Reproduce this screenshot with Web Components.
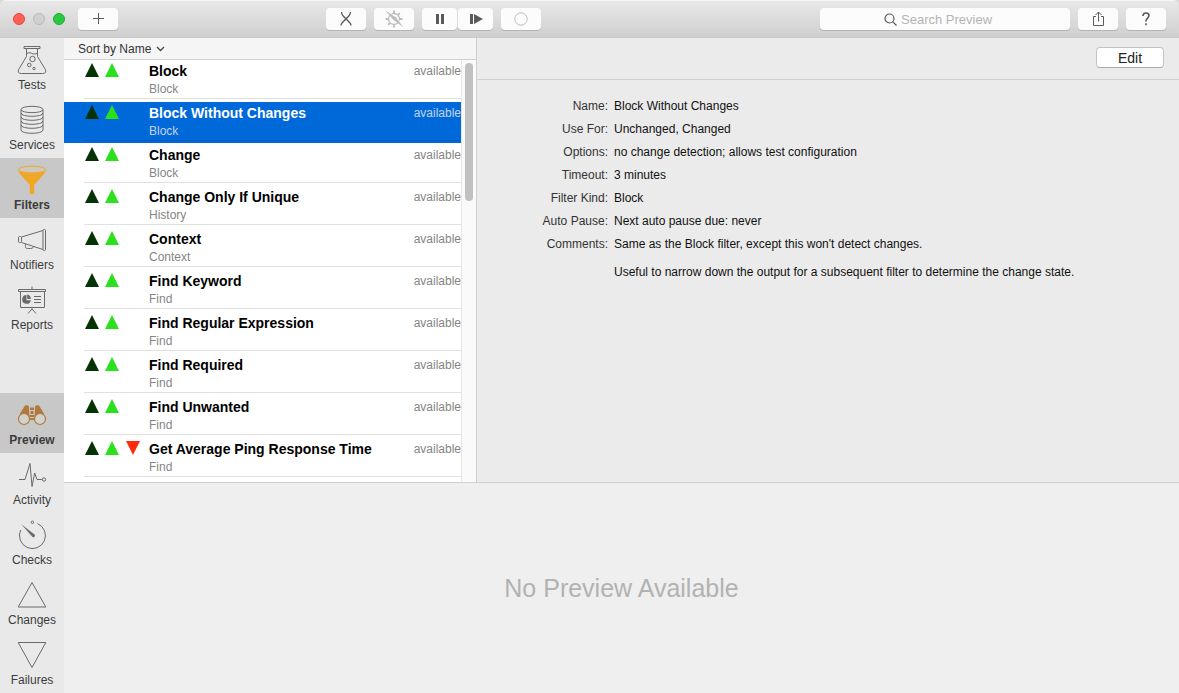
<!DOCTYPE html>
<html lang="en">
<head>
<meta charset="utf-8">
<title>Filters</title>
<style>
  html, body {
    height: 100%;
    margin: 0;
  }

  body {
    background: #d8d8d8;
    color: #111;
    font: 12px/16px "Liberation Sans", Arial, Helvetica, sans-serif;
    overflow: hidden;
  }
</style>
</head>
<body>

<app-window>
  <app-toolbar slot="toolbar"></app-toolbar>

  <side-bar slot="sidebar">
    <side-item icon="tests">Tests</side-item>
    <side-item icon="services">Services</side-item>
    <side-item icon="filters" selected>Filters</side-item>
    <side-item icon="notifiers">Notifiers</side-item>
    <side-item icon="reports">Reports</side-item>
    <side-item slot="bottom" icon="preview" selected>Preview</side-item>
    <side-item slot="bottom" icon="activity">Activity</side-item>
    <side-item slot="bottom" icon="checks">Checks</side-item>
    <side-item slot="bottom" icon="changes">Changes</side-item>
    <side-item slot="bottom" icon="failures">Failures</side-item>
  </side-bar>

  <filter-list slot="list">
    <filter-row kind="Block">Block</filter-row>
    <filter-row kind="Block" selected>Block Without Changes</filter-row>
    <filter-row kind="Block">Change</filter-row>
    <filter-row kind="History">Change Only If Unique</filter-row>
    <filter-row kind="Context">Context</filter-row>
    <filter-row kind="Find">Find Keyword</filter-row>
    <filter-row kind="Find">Find Regular Expression</filter-row>
    <filter-row kind="Find">Find Required</filter-row>
    <filter-row kind="Find">Find Unwanted</filter-row>
    <filter-row kind="Find" failed>Get Average Ping Response Time</filter-row>
  </filter-list>

  <detail-pane slot="detail">
    <detail-field label="Name">Block Without Changes</detail-field>
    <detail-field label="Use For">Unchanged, Changed</detail-field>
    <detail-field label="Options">no change detection; allows test configuration</detail-field>
    <detail-field label="Timeout">3 minutes</detail-field>
    <detail-field label="Filter Kind">Block</detail-field>
    <detail-field label="Auto Pause">Next auto pause due: never</detail-field>
    <detail-field label="Comments">Same as the Block filter, except this won't detect changes.<span slot="more">Useful to narrow down the output for a subsequent filter to determine the change state.</span></detail-field>
  </detail-pane>

  <preview-pane slot="preview">No Preview Available</preview-pane>
</app-window>

<script>
// Sidebar icons, all drawn on a 32x32 grid
const ICONS = {
  tests: `
    <path d="M8 2.500h16v2H8z M10.500 4.500v8L3.200 24.500q-2.800 5 2.300 5h21q5.100 0 2.300-5L21.500 12.500v-8"/>
    <path d="M10.500 9.500c3-1.400 4.500-.5 5.500 0s3 1 5.500-.5"/>
    <circle cx="16.500" cy="15" r="2.700"/><circle cx="13.300" cy="21" r="1.800"/><circle cx="18" cy="24.500" r="1.200"/>`,
  services: `
    <ellipse cx="16" cy="5.500" rx="11" ry="3.200"/>
    <path d="M5 5.500v3.500c0 4.400 22 4.400 22 0V5.500 M5 9v4c0 4.400 22 4.400 22 0V9 M5 13v4c0 4.400 22 4.400 22 0v-4 M5 17v4c0 4.400 22 4.400 22 0v-4 M5 21v5c0 4.400 22 4.400 22 0v-5"/>`,
  filters: `
    <path fill="#f0a726" stroke="none" d="M2 5.500c0 5 28 5 28 0 0 3-3 5.500-6 9l-4 4.500c-1 1-1.800 1.600-1.800 3v8h-4.400v-8c0-1.400-.8-2-1.800-3l-4-4.500c-3-3.500-6-6-6-9z"/>
    <ellipse cx="16" cy="5.500" rx="13.500" ry="3.300" fill="#cdc9c2" stroke="#f0a726"/>`,
  notifiers: `
    <rect x="2.500" y="12.500" width="3" height="6" rx="1"/>
    <path d="M5.500 13L27 6.500 M5.500 18.500L27 25.500"/>
    <rect x="27" y="5.500" width="2.500" height="21" rx="1"/>
    <path d="M9.500 20c-.5 5 1 4.500 3.500 4.500s4 0 4.500-2"/>`,
  reports: `
    <path d="M16 2.500v3 M2.500 5.500h27v2h-27z M4.500 7.500v16h24v-16 M16 23.500v1.500 M12 29.500l4-4.500 4 4.500 M18 12.500h7 M18 15.500h7 M18 18.500h7"/>
    <path fill="#6a6a6a" stroke="none" d="M10.500 15.500V11a4.400 4.400 0 1 0 4.400 5.200h-4.400z M11.200 10.600a4.400 4.400 0 0 1 3.600 4.400h-3.600z"/>`,
  preview: `
    <g fill="#b07a3e" stroke="none">
      <path d="M8.600 7q2.200-1.500 4.200 0l.7 11.500Q10 14 3.500 15.500z"/>
      <path d="M23.400 7q-2.200-1.500-4.200 0l-.7 11.500q3.500-4.500 10-3z"/>
      <path d="M14 8.500h4v2.500h-4z M14.500 12h3v3h-3z M13.500 16h5v2h-5z M14 19h4v2h-4z"/>
    </g>
    <g fill="#d4d0cb" stroke="#b07a3e" stroke-width="1.200"><circle cx="8" cy="20" r="5.500"/><circle cx="24" cy="20" r="5.500"/></g>`,
  activity: `
    <path d="M3 20.500h6L14 4.500l2 23 2.700-13.500 2.300 6.500h5.300" stroke-linejoin="bevel"/><circle cx="28" cy="20.500" r="1.700"/>`,
  checks: `
    <path d="M21.500 4.600A13 13 0 1 1 4.700 11"/><circle cx="16.400" cy="3.300" r="1.200"/>
    <path fill="#6a6a6a" stroke="none" d="M5.300 5.300L18.500 15.500q1 1.200 0 2.200t-2.200 0z"/>`,
  changes: `<path d="M16 3.500L29.800 28H2.200z"/>`,
  failures: `<path d="M16 28.500L29.800 3.500H2.200z"/>`
};

class BaseElement extends HTMLElement {
  connectedCallback() {
    if (!this.shadowRoot) {
      this.attachShadow({ mode: 'open' });
      this.shadowRoot.innerHTML = this.render();
    }
  }
}

/* ---------- window frame ---------- */
class AppWindow extends BaseElement {
  render() {
    return `
      <style>
        :host {
          display: grid;
          grid-template: 38px minmax(0, 1fr) 211px / 64px 413px minmax(0, 1fr);
          grid-template-areas:
            "toolbar toolbar toolbar"
            "sidebar list detail"
            "sidebar preview preview";
          height: 100vh;
          background: #ebebeb;
          border-radius: 6px 6px 0 0;
          overflow: hidden;
        }
        ::slotted([slot="toolbar"]) { grid-area: toolbar; }
        ::slotted([slot="sidebar"]) { grid-area: sidebar; }
        ::slotted([slot="list"]) { grid-area: list; }
        ::slotted([slot="detail"]) { grid-area: detail; }
        ::slotted([slot="preview"]) { grid-area: preview; }
      </style>
      <slot name="toolbar"></slot>
      <slot name="sidebar"></slot>
      <slot name="list"></slot>
      <slot name="detail"></slot>
      <slot name="preview"></slot>
    `;
  }
}

/* ---------- toolbar ---------- */
class ToolButton extends BaseElement {
  render() {
    return `
      <style>
        :host { display: block; width: 40px; }
        :host([narrow]) { width: 35px; }
        button {
          display: flex;
          align-items: center;
          justify-content: center;
          width: 100%;
          height: 22px;
          padding: 0;
          border: 0;
          border-radius: 4px;
          background: #fcfcfc;
          box-shadow: 0 1px 0 #b4b4b4;
          color: inherit;
        }
      </style>
      <button type="button" aria-label="${this.getAttribute('label')}"><slot></slot></button>
    `;
  }
}

class AppToolbar extends BaseElement {
  render() {
    return `
      <style>
        :host {
          display: grid;
          grid-template-columns: 313px auto 1fr;
          align-items: center;
          box-sizing: border-box;
          padding: 0 13px;
          background: linear-gradient(#e8e8e8, #cfcfcf);
          border-top: 1px solid #f4f4f4;
          border-bottom: 1px solid #cacaca;
          color: #5a5a5a;
        }
        .group { display: flex; align-items: center; gap: 8px; }
        .pair { display: flex; gap: 1px; }
        .end { justify-content: flex-end; }
        .light {
          width: 12px;
          height: 12px;
          padding: 0;
          border: 1px solid #e2463f;
          border-radius: 50%;
          background: #ff5f57;
        }
        .light.off { background: #d0d0d0; border-color: #b9b9b9; }
        .light.zoom { background: #28c940; border-color: #1fab33; }
        .lights { display: flex; gap: 8px; margin-right: 5px; }
        svg { display: block; fill: none; stroke: currentColor; }
        .dim { color: #bdbdbd; }
        .search {
          display: flex;
          align-items: center;
          justify-content: center;
          gap: 4px;
          width: 250px;
          height: 22px;
          border-radius: 4px;
          background: #fcfcfc;
          box-shadow: 0 1px 0 #b4b4b4;
        }
        input {
          width: 105px;
          height: 20px;
          padding: 1px 0 0;
          border: 0;
          outline: 0;
          background: none;
          color: #333;
          font: inherit;
          font-size: 13px;
        }
        input::placeholder { color: #b4b4b4; opacity: 1; }
      </style>
      <div class="group">
        <div class="lights">
          <button class="light" aria-label="Close"></button>
          <button class="light off" aria-label="Minimize"></button>
          <button class="light zoom" aria-label="Zoom"></button>
        </div>
        <tool-button label="Add">
          <svg width="12" height="12"><path d="M6.500 0v11 M1 5.500h11"/></svg>
        </tool-button>
      </div>
      <div class="group">
        <tool-button label="Delete">
          <svg width="12" height="16" stroke-width="1.300"><path d="M1.500 1q0 2 1.500 3.800L10 12q1 1.200 1 2.500 M10.500 1q0 2-1.500 3.800L2 12q-1 1.200-1 2.500"/></svg>
        </tool-button>
        <tool-button label="Disable" class="dim">
          <svg width="20" height="18">
            <circle cx="10" cy="9" r="5.500" stroke-width="1.300"/>
            <path stroke-width="1.800" d="M10 .5v3 M10 14.500v3 M1.500 9h3 M15.500 9h3 M15.800 3.200l-1.800 1.800 M4.200 14.800L6 13"/>
            <path stroke="#fcfcfc" stroke-width="1.300" d="M3 .5l17 15"/>
            <path fill="currentColor" stroke="none" d="M1 0l11 7.500 7.500 10-10.500-8z"/>
          </svg>
        </tool-button>
        <div class="pair">
          <tool-button label="Pause" narrow>
            <svg width="10" height="12" stroke-width="3"><path d="M2.500 1v10 M7.500 1v10"/></svg>
          </tool-button>
          <tool-button label="Step" narrow>
            <svg width="14" height="12"><path stroke-width="3" d="M2.500 1v10"/><path fill="currentColor" stroke="none" d="M5 1l9 5-9 5z"/></svg>
          </tool-button>
        </div>
        <tool-button label="Status" class="dim">
          <svg width="14" height="14"><circle cx="7" cy="7" r="6.200"/></svg>
        </tool-button>
      </div>
      <div class="group end">
        <label class="search">
          <svg width="13" height="13" stroke-width="1.200"><circle cx="5.500" cy="5.500" r="4.500"/><path d="M8.800 8.800l3.700 3.700"/></svg>
          <input type="search" placeholder="Search Preview" aria-label="Search Preview">
        </label>
        <tool-button label="Share">
          <svg width="13" height="16"><path d="M4 5.500H1.500v9h10v-9H9 M6.500 10.500V1 M3.500 4l3-3 3 3"/></svg>
        </tool-button>
        <tool-button label="Help">
          <svg width="8" height="14" stroke-width="1.600"><path d="M1 4q0-3 3-3t3 2.600c0 2.600-3 2.600-3 5.400v.5"/><path d="M4 11.300v2"/></svg>
        </tool-button>
      </div>
    `;
  }
}

/* ---------- sidebar ---------- */
class SideBar extends BaseElement {
  render() {
    return `
      <style>
        :host {
          display: flex;
          flex-direction: column;
          justify-content: space-between;
          background: #e9e9e9;
          overflow: hidden;
        }
      </style>
      <nav><slot></slot></nav>
      <nav><slot name="bottom"></slot></nav>
    `;
  }
}

class SideItem extends BaseElement {
  render() {
    return `
      <style>
        :host { display: block; }
        button {
          display: flex;
          flex-direction: column;
          align-items: center;
          gap: 1px;
          width: 100%;
          height: 60px;
          padding: 6px 0 0;
          border: 0;
          background: none;
          color: #3c3c3c;
          font: inherit;
        }
        :host([selected]) button { background: #c8c8c8; font-weight: bold; }
        svg { fill: none; stroke: #6a6a6a; flex: none; }
      </style>
      <button type="button">
        <svg width="32" height="32" viewBox="0 0 32 32">${ICONS[this.getAttribute('icon')]}</svg>
        <slot></slot>
      </button>
    `;
  }
}

/* ---------- filter list ---------- */
class FilterList extends BaseElement {
  render() {
    return `
      <style>
        :host {
          display: flex;
          flex-direction: column;
          border-right: 1px solid #d0d0d0;
          background: #fff;
          overflow: hidden;
        }
        header {
          display: flex;
          align-items: center;
          flex: none;
          height: 21px;
          padding-left: 14px;
          background: #f5f5f5;
          border-bottom: 1px solid #d0d0d0;
        }
        label { display: flex; align-items: center; gap: 4px; }
        select {
          appearance: none;
          padding: 0;
          border: 0;
          background: none;
          color: #333;
          font: inherit;
        }
        svg { fill: none; stroke: #444; stroke-width: 1.300; }
        .body { display: flex; flex: 1; min-height: 0; }
        .rows { flex: 1; overflow: hidden; }
        .track {
          width: 8px;
          padding: 3px 3px 3px 3px;
          background: #fafafa;
          border-left: 1px solid #e6e6e6;
        }
        .thumb { height: 138px; border-radius: 4px; background: #c1c1c1; }
      </style>
      <header>
        <label>
          <select aria-label="Sort order"><option>Sort by Name</option></select>
          <svg width="9" height="6"><path d="M1 1l3.500 3.500L8 1"/></svg>
        </label>
      </header>
      <div class="body">
        <div class="rows" role="listbox" aria-label="Filters"><slot></slot></div>
        <div class="track"><div class="thumb"></div></div>
      </div>
    `;
  }
}

class FilterRow extends BaseElement {
  connectedCallback() {
    super.connectedCallback();
    this.setAttribute('role', 'option');
    this.setAttribute('aria-selected', this.hasAttribute('selected'));
  }

  render() {
    const failed = this.hasAttribute('failed');

    return `
      <style>
        :host {
          display: block;
          height: 41px;
          margin-bottom: 1px;
          color: #000;
        }
        .cell {
          display: grid;
          grid-template: 22px 16px / 65px 1fr auto;
          align-items: center;
          margin-left: 20px;
          border-bottom: 1px solid #e0e0e0;
        }
        .name { font-size: 14px; font-weight: bold; }
        .kind { grid-column: 2 / 4; align-self: start; line-height: 14px; }
        .kind, .state { color: #858585; }
        svg { display: block; align-self: start; margin-top: 3px; }
        :host([selected]) { background: #0069d9; color: #fff; }
        :host([selected]) .cell { border-color: #005cbe; }
        :host([selected]) .kind, :host([selected]) .state { color: #c4d3ec; }
      </style>
      <div class="cell">
        <svg width="60" height="14">
          <path fill="#063306" d="M8 0l7 14H1z"/>
          <path fill="#2be01c" d="M28 0l7 14H21z"/>
          ${failed ? '<path fill="#ff2a0a" d="M42 0h14l-7 14z"/>' : ''}
        </svg>
        <span class="name"><slot></slot></span>
        <span class="state">available</span>
        <span class="kind">${this.getAttribute('kind')}</span>
      </div>
    `;
  }
}

/* ---------- detail ---------- */
class DetailPane extends BaseElement {
  render() {
    return `
      <style>
        :host { display: block; background: #ebebeb; overflow: hidden; }
        header {
          display: flex;
          align-items: center;
          justify-content: flex-end;
          box-sizing: border-box;
          height: 42px;
          padding: 0 15px 3px;
          border-bottom: 1px solid #d0d0d0;
        }
        button {
          width: 68px;
          height: 21px;
          padding: 1px 0 0;
          border: 1px solid #c4c4c4;
          border-bottom-color: #a8a8a8;
          border-radius: 4px;
          background: #fff;
          color: #222;
          font: inherit;
          font-size: 14px;
        }
        dl {
          display: flex;
          flex-direction: column;
          gap: 7px;
          margin: 0;
          padding: 18px 15px 0 0;
        }
      </style>
      <header><button type="button">Edit</button></header>
      <dl><slot></slot></dl>
    `;
  }
}

class DetailField extends BaseElement {
  render() {
    return `
      <style>
        :host { display: grid; grid-template-columns: 131px 1fr; gap: 6px; }
        dt { color: #333; text-align: right; }
        dd { margin: 0; }
        ::slotted([slot="more"]) { display: block; margin-top: 12px; }
      </style>
      <dt>${this.getAttribute('label')}:</dt>
      <dd><slot></slot><slot name="more"></slot></dd>
    `;
  }
}

/* ---------- preview ---------- */
class PreviewPane extends BaseElement {
  render() {
    return `
      <style>
        :host {
          display: flex;
          align-items: center;
          justify-content: center;
          border-top: 1px solid #d0d0d0;
          background: #efefef;
          color: #b2b2b2;
          font-size: 25px;
          line-height: 32px;
        }
      </style>
      <slot></slot>
    `;
  }
}

customElements.define('app-window', AppWindow);
customElements.define('tool-button', ToolButton);
customElements.define('app-toolbar', AppToolbar);
customElements.define('side-bar', SideBar);
customElements.define('side-item', SideItem);
customElements.define('filter-list', FilterList);
customElements.define('filter-row', FilterRow);
customElements.define('detail-pane', DetailPane);
customElements.define('detail-field', DetailField);
customElements.define('preview-pane', PreviewPane);
</script>
</body>
</html>
